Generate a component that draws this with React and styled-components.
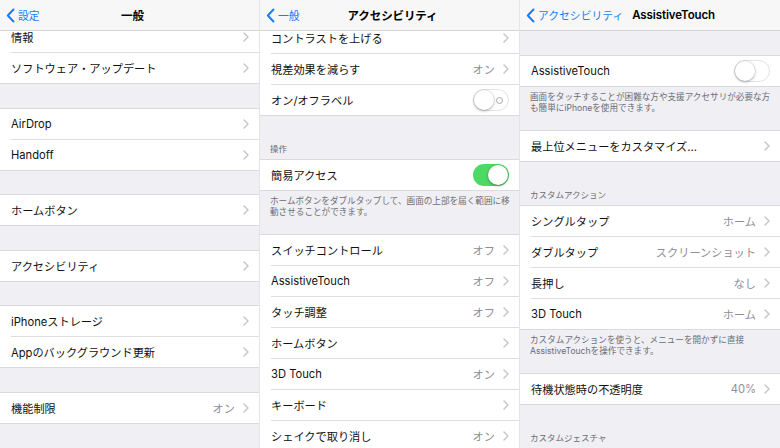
import React from 'react';
import styled, { createGlobalStyle } from 'styled-components';

const GlobalStyle = createGlobalStyle`
  body {
    margin: 0;
    background: #efeff4;
    font-family: Inter, "Noto Sans CJK JP", sans-serif;
    -webkit-font-smoothing: antialiased;
  }
`;

const ChevronIcon = () => (
  <svg width="6" height="10" viewBox="0 0 6 10">
    <polyline points="1,1 5,5 1,9" fill="none" stroke="#c4c4c9" strokeWidth="1.4" strokeLinecap="round" strokeLinejoin="round" />
  </svg>
);

const BackIcon = () => (
  <svg width="9" height="15" viewBox="0 0 9 15">
    <polyline points="7.5,1.5 1.8,7.5 7.5,13.5" fill="none" stroke="#157efb" strokeWidth="2" strokeLinecap="round" strokeLinejoin="round" />
  </svg>
);

const Cell = ({ label, value, chevron = true, toggle, on, onOffLabel }) => (
  <CellWrap>
    <CellInner>
      <Label>{label}</Label>
      <Accessory>
        {value && <Value>{value}</Value>}
        {chevron && !toggle && <ChevronIcon />}
        {toggle && (
          <Toggle $on={on}>
            {onOffLabel && !on && <OffMark />}
            <Knob $on={on} />
          </Toggle>
        )}
      </Accessory>
    </CellInner>
  </CellWrap>
);

const Nav = ({ back, title, inline }) => (
  <NavBar $inline={inline}>
    <BackButton>
      <BackIcon />
      <BackLabel>{back}</BackLabel>
    </BackButton>
    <NavTitle>{title}</NavTitle>
    {!inline && <span />}
  </NavBar>
);

const App = () => {
  return (
    <>
      <GlobalStyle />
      <Screen>
        <Panel>
          <Nav back="設定" title="一般" />
          <Body>
            <List $scroll={10}>
              <Group>
                <Cell label="情報" />
                <Cell label="ソフトウェア・アップデート" />
              </Group>
              <Gap $h={24} />
              <Group>
                <Cell label="AirDrop" />
                <Cell label="Handoff" />
              </Group>
              <Gap $h={23} />
              <Group>
                <Cell label="ホームボタン" />
              </Group>
              <Gap $h={24} />
              <Group>
                <Cell label="アクセシビリティ" />
              </Group>
              <Gap $h={23} />
              <Group>
                <Cell label="iPhoneストレージ" />
                <Cell label="Appのバックグラウンド更新" />
              </Group>
              <Gap $h={24} />
              <Group>
                <Cell label="機能制限" value="オン" />
              </Group>
            </List>
          </Body>
        </Panel>

        <Panel>
          <Nav back="一般" title="アクセシビリティ" />
          <Body>
            <List $scroll={9}>
              <Group>
                <Cell label="コントラストを上げる" />
                <Cell label="視差効果を減らす" value="オン" />
                <Cell label="オン/オフラベル" toggle onOffLabel />
              </Group>
              <SectionHeader>操作</SectionHeader>
              <Group>
                <Cell label="簡易アクセス" toggle on />
              </Group>
              <Footer>
                ホームボタンをダブルタップして、画面の上部を届く範囲に移<br />
                動させることができます。
              </Footer>
              <Group>
                <Cell label="スイッチコントロール" value="オフ" />
                <Cell label="AssistiveTouch" value="オフ" />
                <Cell label="タッチ調整" value="オフ" />
                <Cell label="ホームボタン" />
                <Cell label="3D Touch" value="オン" />
                <Cell label="キーボード" />
                <Cell label="シェイクで取り消し" value="オン" />
              </Group>
            </List>
          </Body>
        </Panel>

        <Panel $last>
          <Nav back="アクセシビリティ" title="AssistiveTouch" inline />
          <Body>
            <List>
              <Gap $h={24} />
              <Group>
                <Cell label="AssistiveTouch" toggle />
              </Group>
              <Footer>
                画面をタッチすることが困難な方や支援アクセサリが必要な方<br />
                も簡単にiPhoneを使用できます。
              </Footer>
              <Group>
                <Cell label="最上位メニューをカスタマイズ..." />
              </Group>
              <SectionHeader>カスタムアクション</SectionHeader>
              <Group>
                <Cell label="シングルタップ" value="ホーム" />
                <Cell label="ダブルタップ" value="スクリーンショット" />
                <Cell label="長押し" value="なし" />
                <Cell label="3D Touch" value="ホーム" />
              </Group>
              <Footer>
                カスタムアクションを使うと、メニューを開かずに直接<br />
                AssistiveTouchを操作できます。
              </Footer>
              <Group>
                <Cell label="待機状態時の不透明度" value="40%" />
              </Group>
              <SectionHeader>カスタムジェスチャ</SectionHeader>
            </List>
          </Body>
        </Panel>
      </Screen>
    </>
  );
};

const Screen = styled.div`
  display: flex;
  width: 780px;
  height: 448px;
  overflow: hidden;
`;

const Panel = styled.div`
  width: 260px;
  height: 448px;
  display: flex;
  flex-direction: column;
  background: #efeff4;
  box-sizing: border-box;
  border-right: ${(p) => (p.$last ? 'none' : '1px solid #e4e4e8')};
`;

const NavBar = styled.div`
  flex-shrink: 0;
  height: 30px;
  background: #f7f7f8;
  border-bottom: 1px solid #d3d3d6;
  display: ${(p) => (p.$inline ? 'flex' : 'grid')};
  grid-template-columns: 1fr auto 1fr;
  align-items: center;
  gap: ${(p) => (p.$inline ? '9px' : '0')};
  padding-left: 6px;
  position: relative;
  z-index: 1;
`;

const BackButton = styled.div`
  display: flex;
  align-items: center;
  gap: 3px;
  color: #157efb;
`;

const BackLabel = styled.span`
  font-size: 10.8px;
  color: #157efb;
  white-space: nowrap;
`;

const NavTitle = styled.div`
  font-size: 11.5px;
  font-weight: 600;
  color: #000;
  white-space: nowrap;
  letter-spacing: -0.1px;
`;

const Body = styled.div`
  flex: 1;
  overflow: hidden;
`;

const List = styled.div`
  display: flex;
  flex-direction: column;
  margin-top: ${(p) => (p.$scroll ? `-${p.$scroll}px` : '0')};
`;

const Gap = styled.div`
  height: ${(p) => p.$h}px;
  flex-shrink: 0;
`;

const Group = styled.div`
  background: #fff;
  border-top: 1px solid #dadade;
  border-bottom: 1px solid #dadade;
  flex-shrink: 0;
`;

const CellWrap = styled.div`
  height: 31px;
  padding-left: 11px;
  box-sizing: border-box;

  &:last-child {
    height: 30px;
  }
`;

const CellInner = styled.div`
  height: 100%;
  box-sizing: border-box;
  display: flex;
  align-items: center;
  justify-content: space-between;
  padding-right: 10px;
  border-bottom: 1px solid #dedee2;

  ${CellWrap}:last-child & {
    border-bottom: none;
  }
`;

const Label = styled.span`
  font-size: 11.2px;
  color: #111;
  white-space: nowrap;
`;

const Accessory = styled.div`
  display: flex;
  align-items: center;
  gap: 8px;
`;

const Value = styled.span`
  font-size: 11.2px;
  color: #8e8e93;
  white-space: nowrap;
`;

const Toggle = styled.div`
  position: relative;
  width: 36px;
  height: 22px;
  box-sizing: border-box;
  border-radius: 11px;
  background: ${(p) => (p.$on ? '#4cd964' : '#fff')};
  border: ${(p) => (p.$on ? 'none' : '1px solid #e3e3e6')};
`;

const Knob = styled.div`
  position: absolute;
  top: ${(p) => (p.$on ? '1px' : '0')};
  left: ${(p) => (p.$on ? '15px' : '0')};
  width: 20px;
  height: 20px;
  border-radius: 50%;
  background: #fff;
  box-shadow: 0 1px 3px rgba(0, 0, 0, 0.3), 0 0 0 0.5px rgba(0, 0, 0, 0.08);
`;

const OffMark = styled.div`
  position: absolute;
  right: 5px;
  top: 6.5px;
  width: 5px;
  height: 5px;
  border-radius: 50%;
  border: 1px solid #a9a9ad;
`;

const SectionHeader = styled.div`
  height: 43px;
  flex-shrink: 0;
  box-sizing: border-box;
  display: flex;
  align-items: flex-end;
  padding: 0 10px 5px 10px;
  font-size: 8.5px;
  line-height: 10px;
  color: #6d6d72;
`;

const Footer = styled.div`
  height: 43px;
  flex-shrink: 0;
  box-sizing: border-box;
  padding: 5px 10px 0 10px;
  font-size: 8.6px;
  line-height: 11px;
  color: #6d6d72;
  white-space: nowrap;
`;

export default App;
